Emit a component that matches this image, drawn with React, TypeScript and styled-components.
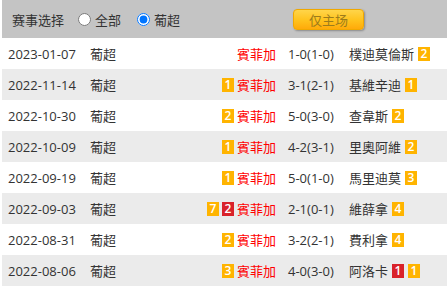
import React from 'react';
import styled, { createGlobalStyle } from 'styled-components';

const GlobalStyle = createGlobalStyle`
  html, body {
    margin: 0;
    padding: 0;
    background: #ffffff;
  }
  body {
    font-family: "Open Sans", "Noto Sans CJK SC", "Noto Sans CJK TC", sans-serif;
    font-size: 13px;
    color: #333333;
  }
`;

const Wrapper = styled.div`
  margin-left: 2px;
  width: 445px;
`;

const Toolbar = styled.div`
  display: flex;
  align-items: center;
  height: 38px;
  padding-left: 10px;
  background-color: #c4c4c4;
`;

const ToolbarLabel = styled.span`
  margin-right: 11px;
`;

const RadioLabel = styled.label`
  display: flex;
  align-items: center;
  margin-right: 13px;
  cursor: pointer;
`;

const Radio = styled.input`
  width: 13px;
  height: 13px;
  margin: 0 4px 0 3px;
`;

const HomeOnlyButton = styled.button`
  margin-left: 100px;
  width: 71px;
  height: 21px;
  padding: 0;
  border: 1px solid #f0a800;
  border-radius: 4px;
  background: linear-gradient(to bottom, #ffd54a 0%, #ffc21c 55%, #ffaa0a 100%);
  box-shadow: 1px 1px 2px rgba(0, 0, 0, 0.3);
  color: #9c7c1c;
  font-family: inherit;
  font-size: 13px;
  cursor: pointer;
`;

const Row = styled.div<{ $shaded: boolean }>`
  display: grid;
  grid-template-columns: 82px 60px 126px 73px 1fr;
  align-items: center;
  height: 31px;
  padding-left: 6px;
  background-color: ${({ $shaded }) => ($shaded ? '#ebebeb' : '#ffffff')};
  white-space: nowrap;
`;

const Cell = styled.div`
  display: flex;
  align-items: center;
`;

const HomeCell = styled(Cell)`
  justify-content: flex-end;
`;

const ScoreCell = styled(Cell)`
  padding-left: 12px;
`;

const TeamName = styled.span<{ $highlight?: boolean }>`
  color: ${({ $highlight }) => ($highlight ? '#ff0000' : '#333333')};
`;

const Badge = styled.span<{ $red?: boolean }>`
  display: inline-flex;
  align-items: center;
  justify-content: center;
  width: 12px;
  height: 14px;
  background-color: ${({ $red }) => ($red ? '#d9222a' : '#ffb400')};
  color: #ffffff;
  font-size: 12px;
  font-weight: 600;
  line-height: 14px;
`;

const BadgeLeft = styled(Badge)`
  margin-right: 3px;
`;

const BadgeRight = styled(Badge)`
  margin-left: 4px;
`;

type Card = { n: number; red?: boolean };

type Match = {
  date: string;
  home: string;
  homeBadges: Card[];
  score: string;
  away: string;
  awayBadges: Card[];
};

const matches: Match[] = [
  { date: '2023-01-07', home: '賓菲加', homeBadges: [], score: '1-0(1-0)', away: '樸迪莫倫斯', awayBadges: [{ n: 2 }] },
  { date: '2022-11-14', home: '賓菲加', homeBadges: [{ n: 1 }], score: '3-1(2-1)', away: '基維辛迪', awayBadges: [{ n: 1 }] },
  { date: '2022-10-30', home: '賓菲加', homeBadges: [{ n: 2 }], score: '5-0(3-0)', away: '查韋斯', awayBadges: [{ n: 2 }] },
  { date: '2022-10-09', home: '賓菲加', homeBadges: [{ n: 1 }], score: '4-2(3-1)', away: '里奧阿維', awayBadges: [{ n: 2 }] },
  { date: '2022-09-19', home: '賓菲加', homeBadges: [{ n: 1 }], score: '5-0(1-0)', away: '馬里迪莫', awayBadges: [{ n: 3 }] },
  { date: '2022-09-03', home: '賓菲加', homeBadges: [{ n: 7 }, { n: 2, red: true }], score: '2-1(0-1)', away: '維薛拿', awayBadges: [{ n: 4 }] },
  { date: '2022-08-31', home: '賓菲加', homeBadges: [{ n: 2 }], score: '3-2(2-1)', away: '費利拿', awayBadges: [{ n: 4 }] },
  { date: '2022-08-06', home: '賓菲加', homeBadges: [{ n: 3 }], score: '4-0(3-0)', away: '阿洛卡', awayBadges: [{ n: 1, red: true }, { n: 1 }] },
];

const App = () => {
  return (
    <Wrapper>
      <GlobalStyle />
      <Toolbar>
        <ToolbarLabel>赛事选择</ToolbarLabel>
        <RadioLabel>
          <Radio type="radio" name="league" />
          全部
        </RadioLabel>
        <RadioLabel>
          <Radio type="radio" name="league" defaultChecked />
          葡超
        </RadioLabel>
        <HomeOnlyButton>仅主场</HomeOnlyButton>
      </Toolbar>
      {matches.map((m, i) => (
        <Row key={m.date} $shaded={i % 2 === 1}>
          <Cell>{m.date}</Cell>
          <Cell>葡超</Cell>
          <HomeCell>
            {m.homeBadges.map((b, j) => (
              <BadgeLeft key={j} $red={b.red}>
                {b.n}
              </BadgeLeft>
            ))}
            <TeamName $highlight>{m.home}</TeamName>
          </HomeCell>
          <ScoreCell>{m.score}</ScoreCell>
          <Cell>
            <TeamName>{m.away}</TeamName>
            {m.awayBadges.map((b, j) => (
              <BadgeRight key={j} $red={b.red}>
                {b.n}
              </BadgeRight>
            ))}
          </Cell>
        </Row>
      ))}
    </Wrapper>
  );
};

export default App;
